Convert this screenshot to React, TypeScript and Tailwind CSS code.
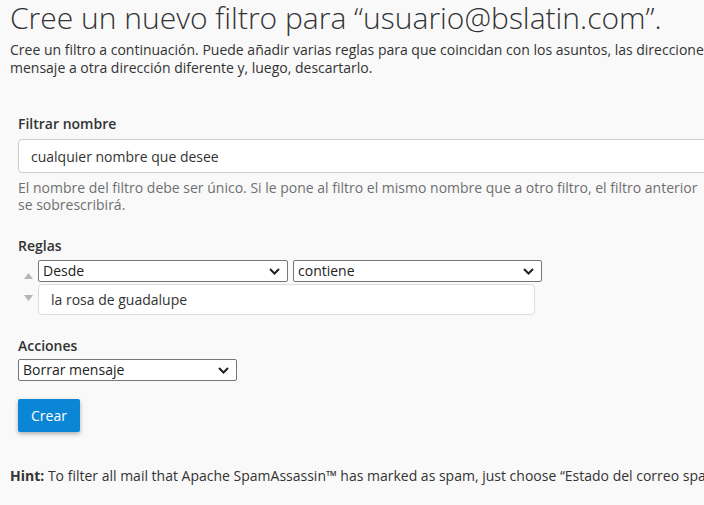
import React from "react";

function Chevron() {
  return (
    <svg width="11" height="7" viewBox="0 0 11 7" className="shrink-0">
      <path d="M1 1l4.5 4.5L10 1" fill="none" stroke="#222" strokeWidth="2" />
    </svg>
  );
}

function FakeSelect({ label, className }: { label: string; className: string }) {
  return (
    <div
      className={`flex h-[22px] items-center justify-between rounded-[2px] border border-[#767676] bg-white pl-[4px] pr-[7px] text-[14px] text-[#222] ${className}`}
    >
      <span className="leading-none">{label}</span>
      <Chevron />
    </div>
  );
}

export default function App() {
  return (
    <div
      className="min-h-[505px] w-[704px] overflow-hidden bg-[#f9f9f9] text-[#333]"
      style={{ fontFamily: '"Open Sans", "Noto Sans", sans-serif' }}
    >
      <h1 className="whitespace-nowrap pl-[10px] pt-[1px] text-[30px] font-light leading-[34px] text-[#333]">
        Cree un nuevo filtro para “usuario@bslatin.com”.
      </h1>
      <div className="mt-[6px] pl-[10px] text-[14px] leading-[18px]">
        <p className="whitespace-nowrap">
          Cree un filtro a continuación. Puede añadir varias reglas para que coincidan con los asuntos, las direcciones u
          otras partes del mensaje. Después puede redirigir el
        </p>
        <p>mensaje a otra dirección diferente y, luego, descartarlo.</p>
      </div>

      <div className="pl-[18px] pt-[38px]">
        <label className="block text-[14px] font-semibold leading-[18px]">Filtrar nombre</label>
        <div className="mt-[6px] flex h-[34px] w-[700px] items-center rounded-[4px] border border-[#ccc] bg-white pl-[12px] text-[14px] text-[#333]">
          cualquier nombre que desee
        </div>
        <p className="mt-[6px] w-[690px] text-[14px] leading-[17px] text-[#6f6f6f]">
          El nombre del filtro debe ser único. Si le pone al filtro el mismo nombre que a otro filtro, el filtro anterior
          se sobrescribirá.
        </p>

        <label className="mt-[24px] block text-[14px] font-semibold leading-[18px]">Reglas</label>
        <div className="mt-[5px] flex">
          <div className="flex w-[20px] flex-col items-center pt-[13px]">
            <svg width="9" height="6" viewBox="0 0 9 6">
              <path d="M0 6L4.5 0L9 6Z" fill="#b5b5b5" />
            </svg>
            <svg width="9" height="6" viewBox="0 0 9 6" className="mt-[16px]">
              <path d="M0 0L4.5 6L9 0Z" fill="#b5b5b5" />
            </svg>
          </div>
          <div className="flex flex-col">
            <div className="flex gap-[5px]">
              <FakeSelect label="Desde" className="w-[250px]" />
              <FakeSelect label="contiene" className="w-[249px]" />
            </div>
            <div className="mt-[2px] flex h-[31px] w-[497px] items-center rounded-[4px] border border-[#ddd] bg-white pl-[12px] text-[14px] text-[#333]">
              la rosa de guadalupe
            </div>
          </div>
        </div>

        <label className="mt-[22px] block text-[14px] font-semibold leading-[18px]">Acciones</label>
        <FakeSelect label="Borrar mensaje" className="mt-[4px] w-[219px]" />

        <button className="mt-[18px] flex h-[33px] w-[62px] items-center justify-center rounded-[2px] bg-[#0b85d5] text-[14px] text-white shadow-[0_2px_4px_rgba(0,0,0,0.3)]">
          Crear
        </button>
      </div>

      <p className="mt-[35px] whitespace-nowrap pl-[10px] text-[14px] leading-[18px]">
        <span className="font-bold">Hint:</span> To filter all mail that Apache SpamAssassin™ has marked as spam, just
        choose “Estado del correo spam” and “comienza con”, then enter “Yes” in the box.
      </p>
    </div>
  );
}
